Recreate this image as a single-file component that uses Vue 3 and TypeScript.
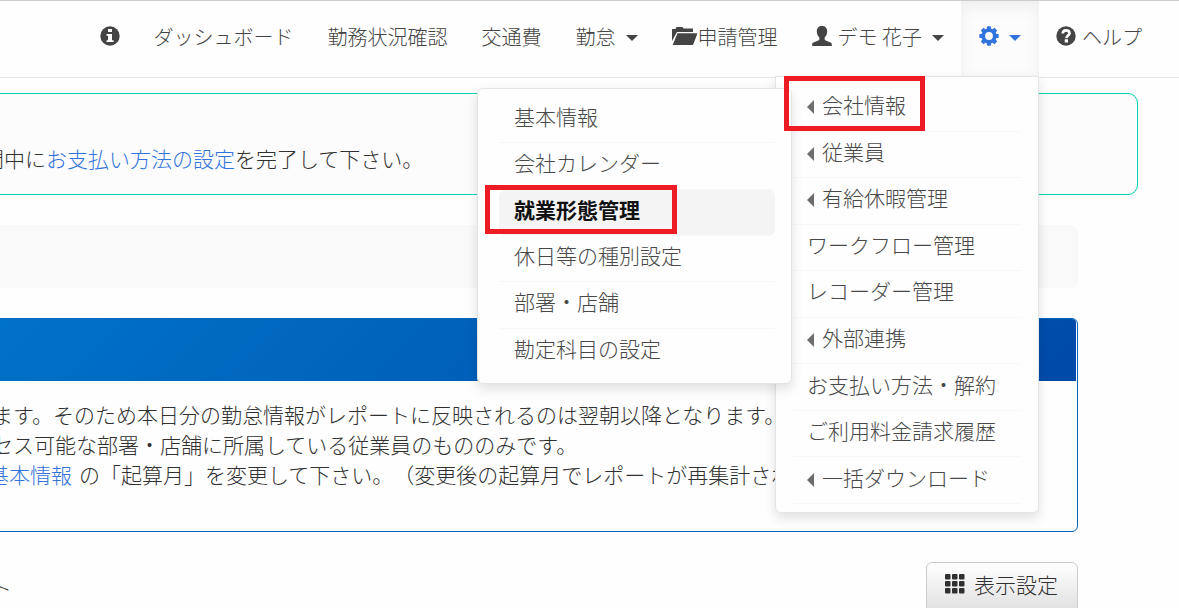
<script setup lang="ts">
interface MenuEntry {
  label: string
  nested?: boolean
  marked?: boolean
}

const settings: MenuEntry[] = [
  { label: '会社情報', nested: true, marked: true },
  { label: '従業員', nested: true },
  { label: '有給休暇管理', nested: true },
  { label: 'ワークフロー管理' },
  { label: 'レコーダー管理' },
  { label: '外部連携', nested: true },
  { label: 'お支払い方法・解約' },
  { label: 'ご利用料金請求履歴' },
  { label: '一括ダウンロード', nested: true },
]

const company: MenuEntry[] = [
  { label: '基本情報' },
  { label: '会社カレンダー' },
  { label: '就業形態管理', marked: true },
  { label: '休日等の種別設定' },
  { label: '部署・店舗' },
  { label: '勘定科目の設定' },
]

const teeth = [0, 45, 90, 135, 180, 225, 270, 315]
const cells = [0, 7, 14]
</script>

<template>
  <div class="page">
    <nav class="navbar">
      <a href="#" class="item" aria-label="お知らせ">
        <svg class="icon" viewBox="0 0 20 20">
          <circle cx="10" cy="10" r="9.7" fill="currentColor" />
          <path d="M8 3h4v3H8zM6.5 8H12v6.2h1.6V16H6.5v-1.8H8V9.8H6.5z" fill="#fff" />
        </svg>
      </a>
      <a href="#" class="item">ダッシュボード</a>
      <a href="#" class="item">勤務状況確認</a>
      <a href="#" class="item">交通費</a>
      <button type="button" class="item">勤怠<span class="caret"></span></button>
      <a href="#" class="item">
        <svg class="icon wide" viewBox="0 0 26 20">
          <path d="M0 15V3h3.500L4.500 1h6l1 1.500H21V6H5z" fill="currentColor" />
          <path d="M5.500 7.300H25.500L21 19H.700z" fill="currentColor" />
        </svg>申請管理
      </a>
      <button type="button" class="item">
        <svg class="icon" viewBox="0 0 20 20">
          <path d="M10 0c3.200 0 5.200 2 5.200 5.300 0 2.700-1 4.700-2.500 6v1.900c0 .7.300 1 1 1.300l4.800 1.900c1 .4 1.300 1 1.300 2V20H.200v-1.600c0-1 .3-1.600 1.300-2l4.800-1.900c.7-.3 1-.6 1-1.300v-1.900c-1.500-1.300-2.500-3.300-2.500-6C4.800 2 6.800 0 10 0z" fill="currentColor" />
        </svg>
        <span class="after-icon">デモ 花子</span><span class="caret"></span>
      </button>
      <div class="dropdown">
        <button type="button" class="item active" aria-label="設定" aria-expanded="true">
          <svg class="icon" viewBox="0 0 20 20">
            <circle cx="10" cy="10" r="5.700" fill="none" stroke="currentColor" stroke-width="3.600" />
            <path v-for="t in teeth" :key="t" d="M8.200.300h3.600l.600 3.400H7.600z" fill="currentColor" :transform="`rotate(${t} 10 10)`" />
          </svg>
          <span class="caret"></span>
        </button>
        <ul class="menu main-menu">
          <li v-for="entry in settings" :key="entry.label" class="row">
            <a href="#" class="entry">
              <span v-if="entry.nested" class="arrow"></span>{{ entry.label }}
            </a>
            <ul v-if="entry.marked" class="menu submenu">
              <li v-for="child in company" :key="child.label" class="row" :class="{ current: child.marked }">
                <a href="#" class="entry">{{ child.label }}</a>
                <span v-if="child.marked" class="frame frame-child"></span>
              </li>
            </ul>
            <span v-if="entry.marked" class="frame frame-parent"></span>
          </li>
        </ul>
      </div>
      <a href="#" class="item">
        <svg class="icon" viewBox="0 0 20 20">
          <circle cx="10" cy="10" r="9.700" fill="currentColor" />
          <path d="M6.800 7.500C6.800 5.200 8 4.300 10 4.300s3.500 1 3.500 2.900c0 2.400-3 2.400-3 5" fill="none" stroke="#fff" stroke-width="2.700" />
          <path d="M8.700 13.300h3.300v3.200H8.700z" fill="#fff" />
        </svg>
        <span class="after-icon">ヘルプ</span>
      </a>
    </nav>

    <main class="content">
      <section class="alert">
        <p>間中に<a href="#">お支払い方法の設定</a>を完了して下さい。</p>
      </section>
      <section class="strip"></section>
      <section class="panel">
        <header class="panel-head"></header>
        <div class="panel-body">
          <p>します。そのため本日分の勤怠情報がレポートに反映されるのは翌朝以降となります。</p>
          <p>クセス可能な部署・店舗に所属している従業員のもののみです。</p>
          <p class="hint"><a href="#">基本情報</a>の「起算月」を変更して下さい。（変更後の起算月でレポートが再集計され</p>
        </div>
      </section>
      <div class="toolbar">
        <span>ート</span>
        <button type="button" class="display">
          <svg class="grid-icon" viewBox="0 0 20 20">
            <template v-for="y in cells" :key="y">
              <rect v-for="x in cells" :key="x" :x="x" :y="y" width="5.500" height="5.500" rx="1" fill="currentColor" />
            </template>
          </svg>表示設定
        </button>
      </div>
    </main>
  </div>
</template>

<style>
html,
body {
  margin: 0;
  overflow: hidden;
  background: #fefefe;
}
</style>

<style scoped>
.page {
  font-family: "Noto Sans CJK JP", sans-serif;
  font-size: 21px;
  font-weight: 300;
  line-height: 30px;
  color: #303030;
  text-spacing-trim: space-all;
}
.page *,
.page {
  box-sizing: border-box;
}
p,
ul {
  margin: 0;
  padding: 0;
  list-style: none;
}
a {
  color: #3273dc;
  text-decoration: none;
}
button {
  font: inherit;
  cursor: pointer;
}
.navbar {
  display: flex;
  justify-content: flex-end;
  height: 78px;
  padding-right: 20px;
  border-top: 1px solid #ccc;
  border-bottom: 1px solid #e6e6e6;
  font-size: 20px;
  white-space: nowrap;
}
.item {
  display: flex;
  align-items: center;
  height: 75px;
  padding: 0 17px 4px;
  border: 0;
  background: none;
  color: #444;
}
.icon {
  width: 20px;
  height: 20px;
  flex: none;
  margin-bottom: 2px;
}
.wide {
  width: 26px;
}
.after-icon {
  margin-left: 6px;
}
.caret {
  margin: 3px 0 0 10px;
  border: 6px solid transparent;
  border-top-color: currentColor;
  border-bottom: 0;
}
.dropdown {
  position: relative;
}
.active {
  padding: 0 18px 4px;
  color: #3273dc;
  background: #fcfcfc;
  box-shadow: inset 0 6px 16px rgba(0, 0, 0, 0.06);
}
.menu {
  position: absolute;
  display: grid;
  grid-auto-rows: 1fr;
  background: #fefefe;
  border: 1px solid #e2e5e8;
  border-radius: 6px;
  box-shadow: 0 5px 12px rgba(0, 0, 0, 0.12);
  font-size: 21px;
}
.main-menu {
  z-index: 2;
  top: 75px;
  right: 0;
  width: 264px;
  min-height: 437px;
  padding: 8px 17px;
  border-top-left-radius: 0;
  border-top-right-radius: 0;
}
.submenu {
  z-index: 3;
  top: 3px;
  right: calc(100% + 1px);
  width: 315px;
  min-height: 296px;
  padding: 8px 16px 8px 21px;
}
.row {
  position: relative;
  border-bottom: 1px solid #f7f7f7;
}
.submenu .row:last-child {
  border-color: transparent;
}
.entry {
  display: flex;
  align-items: center;
  height: 100%;
  padding: 0 14px 7px;
  color: #484848;
}
.submenu .entry {
  padding-left: 15px;
}
.arrow {
  margin: 6px 8px 0 0;
  border: 7px solid transparent;
  border-right-color: #6e6e6e;
  border-left: 0;
}
.current {
  background: #f4f4f4;
  border-radius: 6px;
}
.current .entry {
  color: #111;
  font-weight: 700;
}
.frame {
  position: absolute;
  z-index: 4;
  border: 5px solid #ed1c24;
  pointer-events: none;
}
.frame-parent {
  top: -9px;
  left: -9px;
  width: 141px;
  height: 55px;
}
.frame-child {
  top: -5px;
  left: -14px;
  width: 192px;
  height: 49px;
}
.content {
  margin-left: -30px;
  padding: 15px 101px 0 0;
}
.alert {
  margin-right: -60px;
  padding: 49px 0 21px 12px;
  border: 1px solid #00d1b2;
  border-radius: 10px;
  background: #fcfcfc;
}
.strip {
  height: 63px;
  margin: 30px 0;
  border-radius: 8px;
  background: #f9f9f9;
}
.panel {
  border: 1px solid #0065bd;
  border-radius: 6px;
  padding-right: 1px;
  white-space: nowrap;
}
.panel-head {
  height: 62px;
  border-radius: 0 4px 0 0;
  background: linear-gradient(135deg, #0073c8, #004aa8);
}
.panel-body {
  padding: 18px 0 42px;
  overflow: hidden;
}
.hint {
  padding-left: 10px;
}
.hint a {
  margin: 0 7px;
}
.toolbar {
  display: flex;
  justify-content: space-between;
  align-items: center;
  margin-top: 30px;
}
.display {
  display: flex;
  align-items: center;
  gap: 9px;
  height: 50px;
  padding: 0 19px 6px 18px;
  border: 1px solid #ccc;
  border-radius: 6px;
  background: linear-gradient(#fff, #e0e0e0);
  color: #303030;
}
.grid-icon {
  width: 20px;
  height: 20px;
}
</style>
